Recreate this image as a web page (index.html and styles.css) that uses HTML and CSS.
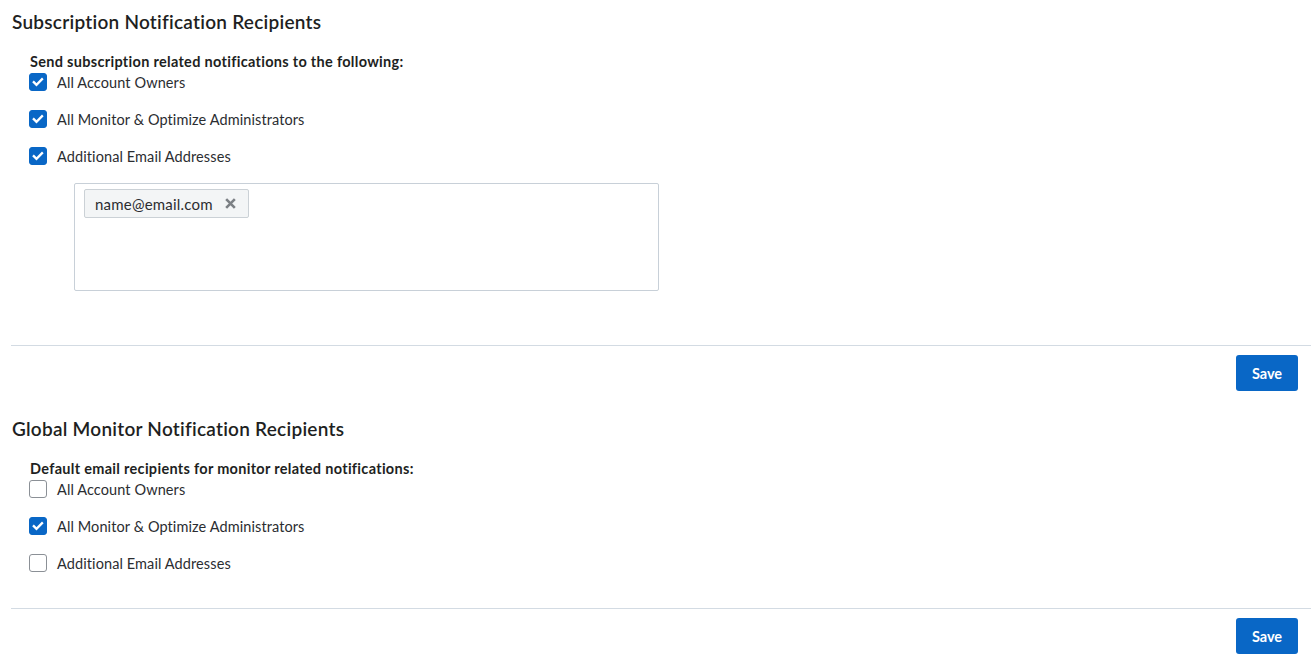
FILE: index.html
```html
<!DOCTYPE html>
<html lang="en">
<head>
<meta charset="utf-8">
<title>Notification Recipients</title>
<link rel="stylesheet" href="styles.css">
</head>
<body>
<main class="page">
  <section class="section first">
    <h2 class="section-title">Subscription Notification Recipients</h2>
    <div class="group">
      <div class="group-label">Send subscription related notifications to the following:</div>
      <label class="row"><span class="cb checked"><svg viewBox="0 0 18 18"><path d="M4.3 9.2l3 2.9 6.2-6.2" /></svg></span><span class="label">All Account Owners</span></label>
      <label class="row"><span class="cb checked"><svg viewBox="0 0 18 18"><path d="M4.3 9.2l3 2.9 6.2-6.2" /></svg></span><span class="label">All Monitor &amp; Optimize Administrators</span></label>
      <label class="row before-box"><span class="cb checked"><svg viewBox="0 0 18 18"><path d="M4.3 9.2l3 2.9 6.2-6.2" /></svg></span><span class="label">Additional Email Addresses</span></label>
      <div class="emails">
        <span class="chip">name@email.com<svg class="chip-x" viewBox="0 0 12 12"><path d="M2 2l8 8M10 2l-8 8" /></svg></span>
      </div>
    </div>
  </section>
  <div class="actions"><button class="btn">Save</button></div>

  <section class="section second">
    <h2 class="section-title">Global Monitor Notification Recipients</h2>
    <div class="group">
      <div class="group-label">Default email recipients for monitor related notifications:</div>
      <label class="row"><span class="cb"></span><span class="label">All Account Owners</span></label>
      <label class="row"><span class="cb checked"><svg viewBox="0 0 18 18"><path d="M4.3 9.2l3 2.9 6.2-6.2" /></svg></span><span class="label">All Monitor &amp; Optimize Administrators</span></label>
      <label class="row last"><span class="cb"></span><span class="label">Additional Email Addresses</span></label>
    </div>
  </section>
  <div class="actions"><button class="btn">Save</button></div>
</main>
</body>
</html>
```

FILE: styles.css
```css
html, body {
  margin: 0;
  padding: 0;
  background: #ffffff;
}
body {
  font-family: Lato, "Noto Sans", sans-serif;
  color: #222428;
}
.page {
  padding-left: 11px;
}
.section {
  border-bottom: 1px solid #d3dbe3;
}
.section.first {
  padding-top: 10px;
  padding-bottom: 54px;
}
.section.second {
  padding-top: 26px;
  padding-bottom: 36px;
}
.section-title {
  margin: 0;
  font-size: 19px;
  letter-spacing: 0.25px;
  line-height: 24px;
  font-weight: 600;
  color: #1e1f22;
  padding-left: 1px;
}
.group {
  padding-left: 18px;
  margin-top: 19px;
}
.group-label {
  font-size: 14.5px;
  letter-spacing: 0.3px;
  line-height: 18px;
  font-weight: 700;
  color: #1e1f22;
  padding-left: 1px;
  margin-bottom: 2px;
}
.row {
  display: flex;
  align-items: center;
  height: 18px;
  margin-bottom: 19px;
  cursor: pointer;
}
.row.before-box {
  margin-bottom: 18px;
}
.row.last {
  margin-bottom: 0;
}
.cb {
  width: 18px;
  height: 18px;
  box-sizing: border-box;
  border: 1px solid #8b9096;
  border-radius: 3px;
  background: #fff;
  flex: none;
  display: flex;
}
.cb.checked {
  background: #0967c6;
  border-color: #0967c6;
}
.cb svg {
  width: 16px;
  height: 16px;
  fill: none;
  stroke: #fff;
  stroke-width: 2.6;
  stroke-linecap: square;
  margin: 0;
}
.label {
  margin-left: 10px;
  font-size: 14.5px;
  letter-spacing: 0.1px;
  color: #2b2d31;
}
.emails {
  margin-left: 45px;
  width: 585px;
  height: 108px;
  box-sizing: border-box;
  border: 1px solid #c8d0d8;
  border-radius: 2px;
  padding: 5px 9px;
}
.chip {
  display: inline-flex;
  align-items: center;
  height: 29px;
  box-sizing: border-box;
  padding: 0 11px 0 10px;
  background: #f3f5f6;
  border: 1px solid #cbd1d6;
  border-radius: 2px;
  font-size: 15px;
  letter-spacing: 0.2px;
  color: #2b2d31;
}
.chip-x {
  width: 13px;
  height: 13px;
  margin-left: 11px;
  fill: none;
  stroke: #7c8085;
  stroke-width: 2.4;
}
.actions {
  display: flex;
  justify-content: flex-end;
  padding: 9px 13px 0 0;
}
.btn {
  width: 62px;
  height: 36px;
  border: none;
  border-radius: 3px;
  background: #0967c6;
  color: #fff;
  font-family: inherit;
  font-size: 14.5px;
  font-weight: 700;
  padding: 0;
  cursor: pointer;
}
```
